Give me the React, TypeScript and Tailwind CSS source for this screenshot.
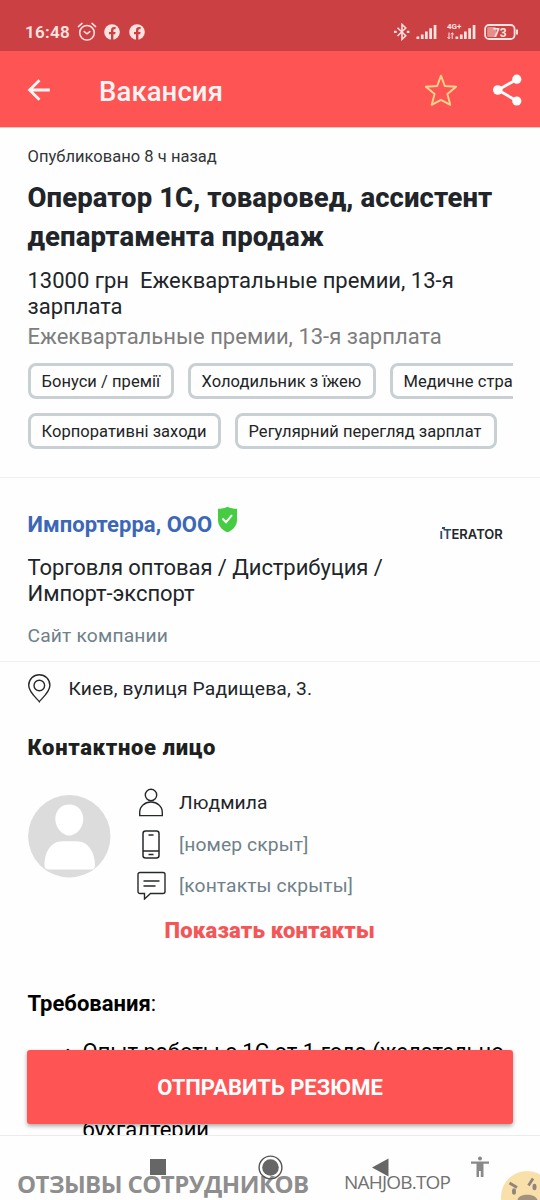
import type { ReactNode } from 'react';

function StatusBar() {
  return (
    <div className="flex h-[51px] items-start bg-[#cb4143] pl-[25px] text-[#ffe3e0]">
      <span className="mt-[20px] w-[45px] text-[17px] leading-[25px] font-semibold tracking-[0.3px] whitespace-nowrap">16:48</span>
      <svg className="mt-[22px] ml-[7px]" width="20" height="20" viewBox="0 0 20 20" fill="none" stroke="currentColor" strokeWidth="1.5" strokeLinecap="round">
        <circle cx="10" cy="10.8" r="7.3" />
        <path d="M7.2 9.6l2.8 2.3 2.8-2.3M1.4 4.6l3.6-3.2M18.6 4.6L15 1.4" />
      </svg>
      <FacebookBadge className="mt-[24px] ml-[7px]" />
      <FacebookBadge className="mt-[24px] ml-[9px]" />
      <svg className="mt-[23px] ml-[248px]" width="18" height="18" viewBox="0 0 18 18" fill="none" stroke="currentColor" strokeWidth="1.5">
        <path d="M4.5 4.7l8.3 8L9 16.3V1.4L12.8 5l-8.3 8" />
        <path d="M1 8.8h2.6M13.8 8.8h2.6" strokeWidth="2.2" />
      </svg>
      <SignalBars className="mt-[24px] ml-[5px]" />
      <div className="ml-[10px] mt-[22px] flex w-[29px] flex-col">
        <span className="h-[9px] text-[8px] leading-[9px] font-bold">4G+</span>
      </div>
      <svg className="mt-[32px] -ml-[29px]" width="8" height="8" viewBox="0 0 8 8" fill="none" stroke="currentColor" strokeWidth="1">
        <path d="M2 .5v6M.5 5L2 6.8 3.2 5.4M5.2 7V1M3.9 2.3L5.2.8 6.8 2.4" />
      </svg>
      <SignalBars className="mt-[24px]" />
      <svg className="mt-[23px] ml-[8px]" width="36" height="18" viewBox="0 0 36 18">
        <rect x="1.1" y="2" width="29.5" height="14" rx="4" fill="none" stroke="currentColor" strokeWidth="1.8" />
        <rect x="3.2" y="4" width="9" height="10" rx="1.5" fill="#e58f8d" />
        <text x="15.8" y="13.6" textAnchor="middle" fill="currentColor" fontSize="12" fontWeight="700">73</text>
        <path d="M33 6.5v5" stroke="currentColor" strokeWidth="2" />
      </svg>
    </div>
  );
}

function FacebookBadge({ className }: { className: string }) {
  return (
    <svg className={className} width="16" height="16" viewBox="0 0 16 16">
      <circle cx="8" cy="8" r="7.8" fill="currentColor" />
      <path d="M7 16v-5.800H5V7.900h2V6.200c0-2 1.200-3.100 3-3.100.8 0 1.600.1 1.600.1v2h-1c-.9 0-1.200.5-1.200 1.100v1.600h2.200l-.4 2.300H9.400V16z" fill="#cb4143" />
    </svg>
  );
}

function SignalBars({ className }: { className: string }) {
  return (
    <svg className={className} width="21" height="16" viewBox="0 0 21 16" fill="currentColor">
      <path d="M.5 12.600h2.700V15H.5zM4.900 10.500h2.700V15H4.900zM9 7.500h2.700V15H9zM13.300 4.200H16V15h-2.700zM17.700 1h2.700v14h-2.700z" />
    </svg>
  );
}

function AppBar() {
  return (
    <header className="flex h-[77px] items-center border-b border-[#ffc5c5] bg-[#ff5454] text-[#fff5f5]">
      <svg className="mt-[2px] ml-[27px]" width="24" height="24" viewBox="0 0 24 24" fill="none" stroke="currentColor" strokeWidth="2.8">
        <path d="M12.500 2.200L2.600 12l9.900 9.800M2.200 12h20.600" />
      </svg>
      <h1 className="mt-[5px] ml-[48px] w-[123px] text-[27.5px] font-medium tracking-[0.1px] whitespace-nowrap">Вакансия</h1>
      <svg className="mt-[2px] ml-[202px]" width="34" height="34" viewBox="0 0 34 34" fill="none" stroke="#ffd58c" strokeWidth="1.9" strokeLinejoin="round">
        <path d="M17 2.700l3.800 10.300 11.300.8-8.700 7.100 2.900 10.900L17 26.800l-9.300 5 2.900-10.900-8.700-7.100 11.300-.8z" />
      </svg>
      <svg className="mt-[2px] ml-[34px]" width="32" height="34" viewBox="0 0 32 34" fill="#fff" stroke="#fff">
        <path d="M25 6.200L6 17l19 11" fill="none" strokeWidth="2.800" />
        <circle cx="24.800" cy="6.200" r="4.600" stroke="none" />
        <circle cx="5.800" cy="17" r="4.800" stroke="none" />
        <circle cx="24.800" cy="28" r="4.600" stroke="none" />
      </svg>
    </header>
  );
}

function Chip({ children, className }: { children: ReactNode; className: string }) {
  return (
    <span className={`flex h-9 shrink-0 items-center rounded-[8px] border-[3px] border-[#c8d0d4] pt-[3px] pl-[11px] text-[16.5px] tracking-[0.04px] whitespace-nowrap text-[#222426] ${className}`}>
      {children}
    </span>
  );
}

function Summary() {
  return (
    <section className="h-[350px] border-b border-[#efefef] pl-[27.5px] pt-[17px]">
      <p className="h-[24px] text-[16.5px] leading-[24px] tracking-[0.03px] text-[#333638]">Опубликовано 8 ч назад</p>
      <h2 className="mt-[9px] text-[27.5px] leading-[39px] font-extrabold tracking-[0.08px] whitespace-nowrap text-[#212529]">
        Оператор 1С, товаровед, ассистент
        <br />
        департамента продаж
      </h2>
      <p className="mt-[12px] text-[22px] leading-[26px] whitespace-nowrap text-[#212529]">
        13000 грн&nbsp; Ежеквартальные премии, 13-я
        <br />
        зарплата
      </p>
      <p className="mt-[4px] text-[22px] leading-[26px] whitespace-nowrap text-[#7d7d7d]">Ежеквартальные премии, 13-я зарплата</p>
      <div className="mt-[13px] flex w-[485px] gap-[14px] overflow-hidden">
        <Chip className="w-[146px]">Бонуси / премії</Chip>
        <Chip className="w-[188px]">Холодильник з їжею</Chip>
        <Chip className="w-[210px]">Медичне страхування</Chip>
      </div>
      <div className="mt-[14px] flex gap-[14px]">
        <Chip className="w-[193px]">Корпоративні заходи</Chip>
        <Chip className="w-[262px]">Регулярний перегляд зарплат</Chip>
      </div>
    </section>
  );
}

function Company() {
  return (
    <section className="flex h-[184px] border-b border-[#efefef] pl-[27.5px]">
      <div className="w-[412px]">
        <div className="flex h-[77px] items-start pt-[28px]">
          <h3 className="w-[186px] pt-[4px] text-[22px] leading-[30px] font-bold tracking-[0.05px] whitespace-nowrap text-[#3b67b8]">Импортерра, ООО</h3>
          <svg className="ml-[3px]" width="21" height="27" viewBox="0 0 21 27">
            <path d="M10.500.8c3 1.500 6 2 9.500 2v11c0 6-4 10.500-9.500 12.500C5 24.300 1 19.800 1 13.800v-11c3.500 0 6.500-.5 9.500-2z" fill="#45cc43" />
            <path d="M5.500 12.500l3.500 3.700 6-7" fill="none" stroke="#fff" strokeWidth="2" />
          </svg>
        </div>
        <p className="text-[22px] leading-[26px] tracking-[-0.06px] whitespace-nowrap text-[#212529]">
          Торговля оптовая / Дистрибуция /
          <br />
          Импорт-экспорт
        </p>
        <p className="mt-[16px] text-[19.25px] leading-[26px] tracking-[0.16px] text-[#6f8189]">Сайт компании</p>
      </div>
      <div className="mt-[45px] flex h-[24px] items-start font-[Inter] text-[13px] leading-[23px] font-semibold tracking-[0px] text-[#22272b]">
        <span className="relative text-[#28496d]">
          ıT
          <span className="absolute top-[4px] left-[2px] h-[2px] w-[3px] -skew-x-12 bg-[#28496d]" />
        </span>
        <span>ERATOR</span>
      </div>
    </section>
  );
}

function ContactRow({ icon, children, className }: { icon: ReactNode; children: ReactNode; className: string }) {
  return (
    <div className={`flex items-center text-[19.25px] tracking-[0.12px] whitespace-nowrap ${className}`}>
      <span className="mr-[13px] flex w-[30px] justify-center text-[#26292b]">{icon}</span>
      <span className="pt-[2px]">{children}</span>
    </div>
  );
}

function Contact() {
  return (
    <section className="h-[310px] pl-[27.5px]">
      <div className="flex h-[52px] items-center">
        <svg width="24" height="29" viewBox="0 0 24 29" fill="none" stroke="#26292b" strokeWidth="1.400">
          <path d="M11.300 27.700C10 25.500.7 18.500.7 11.300a10.600 10.600 0 0 1 21.200 0c0 7.200-9.300 14.200-10.600 16.400z" />
          <circle cx="11.300" cy="11.500" r="5.300" />
        </svg>
        <span className="ml-[17px] pt-[2px] text-[19.25px] tracking-[0.18px] text-[#212529]">Киев, вулиця Радищева, 3.</span>
      </div>
      <h3 className="mt-[19px] text-[22px] leading-[30px] font-black tracking-[0.66px] text-[#1d1f21]">Контактное лицо</h3>
      <div className="mt-[19px] flex">
        <svg className="mt-[13px]" width="83" height="83" viewBox="0 0 83 83">
          <circle cx="41.300" cy="41.300" r="41.200" fill="#dcdcdc" />
          <path d="M41.300 9.500c8 0 14 6 14 14.500S48.500 40.500 41.300 40.500s-14-8-14-16.500S33.300 9.500 41.300 9.500zM16.500 70.500c0-13 6-24.200 18-24.200h14c12 0 18.500 11.200 18.500 24.200 0 2.700-1.500 4-4 4H20.500c-2.500 0-4-1.300-4-4z" fill="#fff" />
        </svg>
        <div className="ml-[25.5px]">
          <ContactRow className="h-[41px] text-[#212529]" icon={
            <svg width="26" height="29" viewBox="0 0 26 29" fill="none" stroke="currentColor" strokeWidth="1.400">
              <circle cx="13" cy="7" r="5.700" />
              <path d="M1.700 27.600v-3.300c0-6 5-10.300 11.300-10.300s11.300 4.300 11.300 10.300v3.300z" />
            </svg>
          }>Людмила</ContactRow>
          <ContactRow className="h-[42px] text-[#6f8189]" icon={
            <svg width="18" height="29" viewBox="0 0 18 29" fill="none" stroke="currentColor" strokeWidth="1.500">
              <rect x="1" y="1" width="16" height="27" rx="2.500" />
              <path d="M1 21h16M6.500 5h5M6.500 24.500h5" />
            </svg>
          }>[номер скрыт]</ContactRow>
          <ContactRow className="h-[41px] text-[#6f8189]" icon={
            <svg width="29" height="29" viewBox="0 0 29 29" fill="none" stroke="currentColor" strokeWidth="1.400">
              <path d="M3 1.500h23a2 2 0 0 1 2 2v17a2 2 0 0 1-2 2H13.500L7.500 28v-5.500H3a2 2 0 0 1-2-2v-17a2 2 0 0 1 2-2zM6.500 10h16M6.500 15h12" />
            </svg>
          }>[контакты скрыты]</ContactRow>
        </div>
      </div>
      <button className="mt-[10px] ml-[137px] block text-[22px] leading-[30px] font-black tracking-[0.2px] whitespace-nowrap text-[#f45658]">Показать контакты</button>
    </section>
  );
}

function Requirements() {
  return (
    <section className="h-[163px] overflow-hidden pt-[17px] pl-[27.5px] text-[22px] text-black">
      <h3 className="h-[30px] leading-[30px]"><b>Требования</b>:</h3>
      <ul className="mt-[20px] ml-[38px] leading-[26px]">
        <li className="flex whitespace-nowrap">
          <span className="-mt-px w-[17px] text-[14px]">•</span>
          <span>
            Опыт работы с 1С от 1 года (желательно
            <br />
            1С 8), знание первичной документации,
            <br />
            основ складского учета и
            <br />
            бухгалтерии
          </span>
        </li>
      </ul>
    </section>
  );
}

function NavBar() {
  return (
    <footer className="relative h-[65px] overflow-hidden border-t border-[#ebebeb] bg-[#fefefe]">
      <div className="flex h-[64px] items-start">
        <span className="absolute top-[32px] left-[17px] font-['Open_Sans'] text-[24px] leading-[32px] font-bold tracking-[-0.55px] whitespace-nowrap text-[#8e8e8e]">ОТЗЫВЫ СОТРУДНИКОВ</span>
        <span className="absolute top-[33px] left-[344px] font-['Open_Sans'] text-[19px] leading-[26px] tracking-[-0.8px] whitespace-nowrap text-[#717171]">NAHJOB.TOP</span>
        <span className="relative mt-[23px] ml-[150px] h-[16px] w-[16px] bg-[#666]" />
        <svg className="relative mt-[19px] ml-[92px]" width="25" height="25" viewBox="0 0 25 25">
          <circle cx="12.500" cy="12.500" r="11.400" fill="none" stroke="#555" strokeWidth="1.400" />
          <circle cx="12.500" cy="12.500" r="8.300" fill="#666" />
        </svg>
        <svg className="relative mt-[22px] ml-[89px]" width="17" height="19" viewBox="0 0 17 19"><path d="M0 9.500L16.500.5v18z" fill="#666" /></svg>
        <svg className="mt-[20px] ml-[81px]" width="20" height="22" viewBox="0 0 20 22" fill="#898989">
          <circle cx="10" cy="2.600" r="2" />
          <path d="M1 5.500h18v2.200h-5.500V21h-2.700v-6H9v6H6.500V7.700H1z" />
        </svg>
      </div>
      <svg className="absolute top-[34px] left-[500px]" width="40" height="30" viewBox="0 0 40 30">
        <circle cx="27" cy="27" r="26" fill="#f9dfaa" />
        <path d="M9.500 13l7.500 4.500M28.500 15.500l4.500-7" stroke="#8e857c" strokeWidth="2.800" />
        <ellipse cx="14" cy="21.500" rx="2" ry="3.200" fill="#8e857c" />
        <ellipse cx="34.500" cy="17" rx="2" ry="3.200" fill="#8e857c" />
        <path d="M17.500 30c1-7 18-7 20 0z" fill="#a2917d" />
      </svg>
    </footer>
  );
}

export default function App() {
  return (
    <div className="relative flex h-[1200px] w-[540px] flex-col overflow-hidden bg-[#fefefe] font-[Roboto,'Noto_Sans',sans-serif]">
      <StatusBar />
      <AppBar />
      <main className="h-[1007px]">
        <Summary />
        <Company />
        <Contact />
        <Requirements />
      </main>
      <NavBar />
      <button className="absolute top-[1050px] left-[27px] h-[74px] w-[486px] rounded-[3px] bg-[#ff5454] text-[22px] font-bold text-white shadow-[0_2px_4px_rgba(0,0,0,0.35)]">
        ОТПРАВИТЬ РЕЗЮМЕ
      </button>
    </div>
  );
}
